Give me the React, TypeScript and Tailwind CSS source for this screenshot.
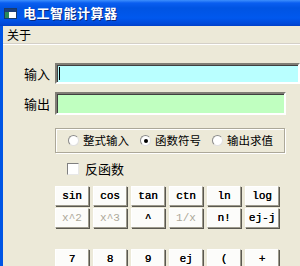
import React from "react";

const cjk = { fontFamily: '"SimSun","Noto Sans CJK SC",sans-serif' };
const mono = { fontFamily: '"Liberation Mono","Courier New",monospace' };

function Btn({ label, disabled }: { label: string; disabled?: boolean }) {
  return (
    <div
      className={`w-[34px] h-[20px] flex items-center justify-center bg-[#fcfcfa] border border-t-white border-l-white border-r-[#9d9a8c] border-b-[#9d9a8c] shadow-[1px_1px_0_#5a5850] text-[11px] ${disabled ? "text-[#aca899]" : "text-black [text-shadow:0.3px_0_0_#000]"}`}
      style={mono}
    >
      {label}
    </div>
  );
}

function Radio({ checked, label }: { checked?: boolean; label: string }) {
  return (
    <div className="flex items-center gap-[4px] whitespace-nowrap">
      <div className="w-[11px] h-[11px] rounded-full bg-white border border-[#8a8a8a] border-b-[#e0e0e0] border-r-[#e0e0e0] flex items-center justify-center">
        {checked && <div className="w-[4px] h-[4px] rounded-full bg-black" />}
      </div>
      <span className="text-[11.5px] text-black leading-none" style={cjk}>
        {label}
      </span>
    </div>
  );
}

export default function App() {
  return (
    <div className="w-[300px] h-[266px] overflow-hidden bg-[#ece9d8] flex flex-col" style={cjk}>
      <div className="h-[26px] shrink-0 flex items-center gap-[6px] pl-[4px] bg-[linear-gradient(#3d8ffd_0px,#0a5ef0_3px,#0054e3_8px,#0058ee_18px,#0049d8_24px,#0040c8_26px)]">
        <div className="w-[13px] h-[11px] bg-white border border-[#1a3a6a] flex flex-col">
          <div className="h-[3px] bg-[#1d3f7a]" />
          <div className="flex-1 flex">
            <div className="w-[4px] bg-[#2a8a5a]" />
          </div>
        </div>
        <span className="text-white text-[13px] font-bold tracking-[0.5px] [text-shadow:1px_1px_0_#0a2a80]">电工智能计算器</span>
      </div>
      <div className="flex-1 flex">
        <div className="w-[3px] bg-[#0055e5] shrink-0" />
        <div className="flex-1 flex flex-col">
          <div className="h-[18px] flex items-center pl-[4px] text-[12px] text-black border-b border-b-[#d4d0c8]">关于</div>
          <div className="h-[1px] bg-white" />
          <div className="flex flex-col pt-[18px]">
            <div className="flex items-center h-[21px]">
              <span className="w-[52px] pl-[21px] text-[13px] text-black">输入</span>
              <div className="flex-1 h-[21px] bg-[#b9ffff] border-2 border-t-[#7f7d75] border-l-[#7f7d75] border-r-white border-b-white shadow-[inset_1px_1px_0_#404040] flex items-center pl-[2px]">
                <div className="w-[1px] h-[13px] bg-black" />
              </div>
            </div>
            <div className="flex items-center h-[23px] mt-[8px]">
              <span className="w-[52px] pl-[21px] text-[13px] text-black">输出</span>
              <div className="w-[231px] h-[23px] bg-[#c0ffc0] border-2 border-t-[#7f7d75] border-l-[#7f7d75] border-r-white border-b-white shadow-[inset_1px_1px_0_#404040]" />
            </div>
            <div className="ml-[52px] mt-[13px] w-[230px] h-[25px] border border-[#aca899] shadow-[inset_1px_1px_0_white,1px_1px_0_white] flex items-center pl-[12px] gap-[11px]">
              <Radio label="整式输入" />
              <Radio checked label="函数符号" />
              <Radio label="输出求值" />
            </div>
            <div className="ml-[64px] mt-[9px] flex items-center gap-[6px] h-[13px]">
              <div className="w-[12px] h-[12px] bg-white border border-[#808080] border-b-[#e8e8e8] border-r-[#e8e8e8]" />
              <span className="text-[13px] text-black">反函数</span>
            </div>
            <div className="ml-[52px] mt-[11px] flex flex-col gap-[2px]">
              <div className="flex gap-[4px]">
                {["sin", "cos", "tan", "ctn", "ln", "log"].map((l) => (
                  <Btn key={l} label={l} />
                ))}
              </div>
              <div className="flex gap-[4px]">
                <Btn label="x^2" disabled />
                <Btn label="x^3" disabled />
                <Btn label="^" />
                <Btn label="1/x" disabled />
                <Btn label="n!" />
                <Btn label="ej-j" />
              </div>
              <div className="flex gap-[4px] mt-[19px]">
                {["7", "8", "9", "ej", "(", "+"].map((l) => (
                  <Btn key={l} label={l} />
                ))}
              </div>
            </div>
          </div>
        </div>
      </div>
    </div>
  );
}
